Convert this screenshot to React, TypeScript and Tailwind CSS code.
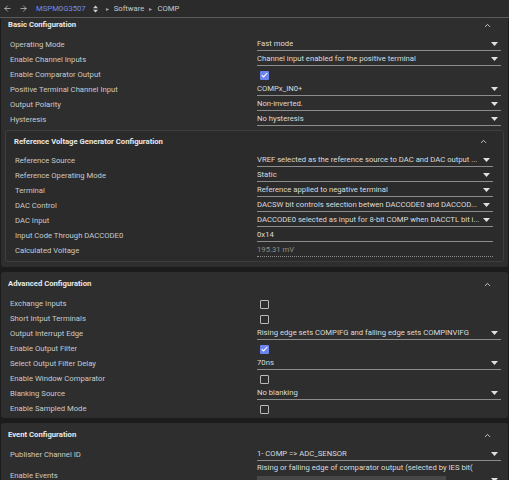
import { ArrowLeft, ArrowRight, ChevronUp } from "lucide-react";

type Row =
  | { label: string; kind: "select"; value: string }
  | { label: string; kind: "check"; checked: boolean }
  | { label: string; kind: "text"; value: string }
  | { label: string; kind: "readonly"; value: string };

const basicRows: Row[] = [
  { label: "Operating Mode", kind: "select", value: "Fast mode" },
  { label: "Enable Channel Inputs", kind: "select", value: "Channel input enabled for the positive terminal" },
  { label: "Enable Comparator Output", kind: "check", checked: true },
  { label: "Positive Terminal Channel Input", kind: "select", value: "COMPx_IN0+" },
  { label: "Output Polarity", kind: "select", value: "Non-inverted." },
  { label: "Hysteresis", kind: "select", value: "No hysteresis" },
];

const refRows: Row[] = [
  { label: "Reference Source", kind: "select", value: "VREF selected as the reference source to DAC and DAC output ..." },
  { label: "Reference Operating Mode", kind: "select", value: "Static" },
  { label: "Terminal", kind: "select", value: "Reference applied to negative terminal" },
  { label: "DAC Control", kind: "select", value: "DACSW bit controls selection betwen DACCODE0 and DACCOD..." },
  { label: "DAC Input", kind: "select", value: "DACCODE0 selected as input for 8-bit COMP when DACCTL bit i..." },
  { label: "Input Code Through DACCODE0", kind: "text", value: "0x14" },
  { label: "Calculated Voltage", kind: "readonly", value: "195.31 mV" },
];

const advRows: Row[] = [
  { label: "Exchange Inputs", kind: "check", checked: false },
  { label: "Short Intput Terminals", kind: "check", checked: false },
  { label: "Output Interrupt Edge", kind: "select", value: "Rising edge sets COMPIFG and falling edge sets COMPINVIFG" },
  { label: "Enable Output Filter", kind: "check", checked: true },
  { label: "Select Output Filter Delay", kind: "select", value: "70ns" },
  { label: "Enable Window Comparator", kind: "check", checked: false },
  { label: "Blanking Source", kind: "select", value: "No blanking" },
  { label: "Enable Sampled Mode", kind: "check", checked: false },
];

function Caret() {
  return (
    <svg width="7" height="4" viewBox="0 0 7 4" className="shrink-0">
      <path d="M0 0h7L3.5 4z" fill="#e0e0e0" />
    </svg>
  );
}

function Check({ checked }: { checked: boolean }) {
  if (checked) {
    return (
      <div className="flex h-[9px] w-[9px] items-center justify-center rounded-[1px] bg-[#6b84ee]">
        <svg width="7" height="6" viewBox="0 0 7 6">
          <path d="M0.8 3.1l1.8 1.8L6.2 1" stroke="#fff" strokeWidth="1.1" fill="none" />
        </svg>
      </div>
    );
  }
  return <div className="h-[9px] w-[9px] rounded-[1px] border border-[#b9b9b9]" />;
}

function Value({ row }: { row: Row }) {
  if (row.kind === "check") {
    return (
      <div className="flex h-full items-center pl-[3px]">
        <Check checked={row.checked} />
      </div>
    );
  }
  if (row.kind === "select") {
    return (
      <div className="flex h-[13px] items-center justify-between gap-[4px] border-b border-[#8c8c8c] pr-[3px]">
        <span className="overflow-hidden whitespace-nowrap text-[#dcdcdc]">{row.value}</span>
        <Caret />
      </div>
    );
  }
  if (row.kind === "text") {
    return (
      <div className="flex h-[13px] items-center border-b border-[#8c8c8c]">
        <span className="text-[#dcdcdc]">{row.value}</span>
      </div>
    );
  }
  return (
    <div className="flex h-[13px] items-center border-b border-dotted border-[#8c8c8c]">
      <span className="text-[#8f8f8f]">{row.value}</span>
    </div>
  );
}

function Rows({ rows, labelW }: { rows: Row[]; labelW: string }) {
  return (
    <div className="flex flex-col">
      {rows.map((r) => (
        <div key={r.label} className="flex h-[15px] items-center">
          <div className={`${labelW} shrink-0 text-[#cacaca]`}>{r.label}</div>
          <div className="h-full min-w-0 flex-1 pt-[1px]">
            <Value row={r} />
          </div>
        </div>
      ))}
    </div>
  );
}

function Header({ title, h, px }: { title: string; h: string; px: string }) {
  return (
    <div className={`flex ${h} items-center justify-between ${px}`}>
      <span className="font-bold text-[#e8e8e8]">{title}</span>
      <ChevronUp size={9} strokeWidth={2.5} color="#cfcfcf" />
    </div>
  );
}

export default function App() {
  return (
    <div
      className="h-[480px] w-[509px] overflow-hidden bg-[#1c1c1c] text-[7.7px] leading-none"
      style={{ fontFamily: "Roboto, 'Noto Sans', sans-serif" }}
    >
      {/* breadcrumb bar */}
      <div className="flex h-[18px] items-center gap-[5px] border-b border-[#5b5b5b] bg-[#2b2b2b] pl-[3px]">
        <ArrowLeft size={9} color="#c8c8c8" />
        <ArrowRight size={9} color="#c8c8c8" className="ml-[2px]" />
        <span className="ml-[3px] text-[#6f8cf2]">MSPM0G3507</span>
        <svg width="5" height="8" viewBox="0 0 5 8" className="ml-[2px]">
          <path d="M0 3.3L2.5 0.5L5 3.3zM0 4.7L2.5 7.5L5 4.7z" fill="#d0d0d0" />
        </svg>
        <span className="ml-[3px] text-[6px] text-[#a8a8a8]">▸</span>
        <span className="text-[#c8c8c8]">Software</span>
        <span className="text-[6px] text-[#a8a8a8]">▸</span>
        <span className="text-[#c8c8c8]">COMP</span>
      </div>

      <div className="flex flex-col gap-[5px] px-[1px]">
        {/* Basic */}
        <div className="rounded-b-[3px] bg-[#2e2e2e] pb-[5px]">
          <Header title="Basic Configuration" h="h-[14px]" px="pl-[7px] pr-[16px]" />
          <div className="mt-[5px] pl-[9px] pr-[7px]">
            <Rows rows={basicRows} labelW="w-[247px]" />
          </div>
          <div className="mx-[4px] mt-[3px] rounded-[3px] border border-[#3e3e3e] bg-[#2b2b2b] pb-[3px]">
            <Header title="Reference Voltage Generator Configuration" h="h-[21px]" px="pl-[8px] pr-[15px]" />
            <div className="mt-[1px] pl-[9px] pr-[10px]">
              <Rows rows={refRows} labelW="w-[242px]" />
            </div>
          </div>
        </div>

        {/* Advanced */}
        <div className="rounded-[3px] bg-[#2e2e2e] pb-[2px]">
          <Header title="Advanced Configuration" h="h-[24px]" px="pl-[7px] pr-[16px]" />
          <div className="pl-[9px] pr-[7px]">
            <Rows rows={advRows} labelW="w-[247px]" />
          </div>
        </div>

        {/* Event */}
        <div className="rounded-t-[3px] bg-[#2e2e2e] pb-[10px]">
          <Header title="Event Configuration" h="h-[24px]" px="pl-[7px] pr-[16px]" />
          <div className="pl-[9px] pr-[7px]">
            <Rows rows={[{ label: "Publisher Channel ID", kind: "select", value: "1- COMP =>  ADC_SENSOR" }]} labelW="w-[247px]" />
            <div className="flex h-[28px] items-center">
              <div className="w-[247px] shrink-0 text-[#cacaca]">Enable Events</div>
              <div className="flex h-full min-w-0 flex-1 flex-col pt-[2px]">
                <span className="whitespace-nowrap text-[#dcdcdc]">Rising or falling edge of comparator output (selected by IES bit(</span>
                <div className="mt-[4px] flex items-center justify-between pr-[3px]">
                  <div className="h-[8px] w-[189px] bg-[#474747]" />
                  <Caret />
                </div>
              </div>
            </div>
          </div>
        </div>
      </div>
    </div>
  );
}
